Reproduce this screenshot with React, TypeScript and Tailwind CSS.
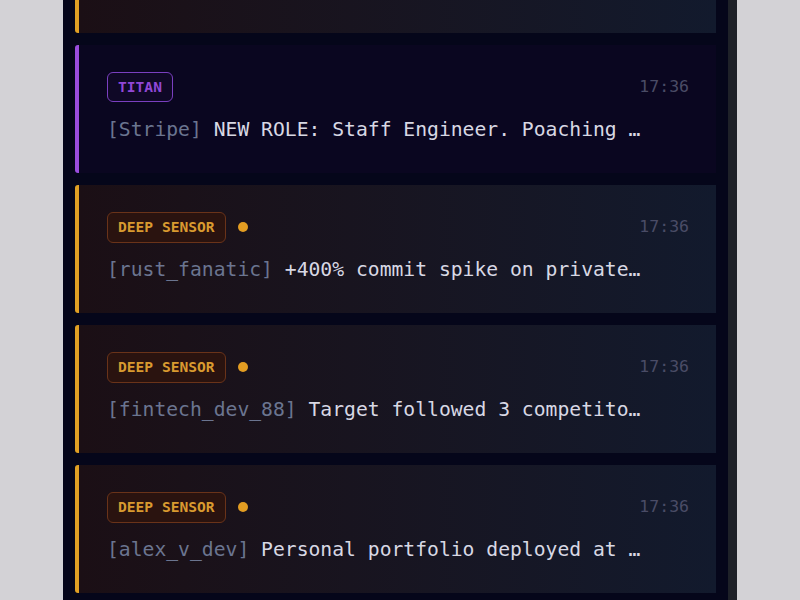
import React from "react";

type Item = {
  kind: "titan" | "deep";
  source: string;
  text: string;
  time: string;
};

const items: Item[] = [
  { kind: "titan", source: "[Stripe]", text: "NEW ROLE: Staff Engineer. Poaching …", time: "17:36" },
  { kind: "deep", source: "[rust_fanatic]", text: "+400% commit spike on private…", time: "17:36" },
  { kind: "deep", source: "[fintech_dev_88]", text: "Target followed 3 competito…", time: "17:36" },
  { kind: "deep", source: "[alex_v_dev]", text: "Personal portfolio deployed at …", time: "17:36" },
];

function Card({ item }: { item: Item }) {
  const titan = item.kind === "titan";
  return (
    <div
      className={
        titan
          ? "h-[128px] shrink-0 rounded-l-[3px] border-l-4 border-[#9a4ddd] bg-[#0a0620] pl-[28px] pr-[27px] pt-[27px]"
          : "h-[128px] shrink-0 rounded-l-[3px] border-l-4 border-[#e0a024] bg-gradient-to-r from-[#1b0f15] to-[#121a2d] pl-[28px] pr-[27px] pt-[27px]"
      }
    >
      <div className="flex h-[30px] items-center justify-between">
        <div className="flex items-center gap-[12px]">
          {titan ? (
            <span className="flex h-[30px] items-center rounded-[6px] border border-[#7a3fc0] bg-[#0f0826] px-[10px] text-[14.6px] font-bold text-[#9147d8]">
              TITAN
            </span>
          ) : (
            <>
              <span className="flex h-[31px] items-center rounded-[6px] border border-[#6a3319] bg-[#2a130f] px-[10px] text-[14.6px] font-bold text-[#d99a2f]">
                DEEP SENSOR
              </span>
              <span className="h-[10px] w-[10px] rounded-full bg-[#e39d22]" />
            </>
          )}
        </div>
        <span className="text-[16.5px] text-[#4a4c66]">{item.time}</span>
      </div>
      <div className="mt-[14px] h-[28px] whitespace-nowrap text-[19.7px] leading-[28px]">
        <span className="text-[#6b7590]">{item.source}</span>
        <span className="text-[#d8d8e4]"> {item.text}</span>
      </div>
    </div>
  );
}

export default function App() {
  return (
    <div
      className="flex h-[600px] w-[800px] overflow-hidden bg-[#d3d2d6]"
      style={{ fontFamily: '"DejaVu Sans Mono", "Liberation Mono", monospace' }}
    >
      <div className="ml-[63px] flex h-full w-[665px] flex-col gap-[12px] overflow-hidden bg-[#05061a] px-[12px]">
        <div className="-mt-[95px] h-[128px] shrink-0 rounded-l-[3px] border-l-4 border-[#e0a024] bg-gradient-to-r from-[#1b0f15] to-[#121a2d]" />
        {items.map((it, i) => (
          <Card key={i} item={it} />
        ))}
      </div>
      <div className="h-full w-[9px] bg-[#1e2128]" />
    </div>
  );
}
